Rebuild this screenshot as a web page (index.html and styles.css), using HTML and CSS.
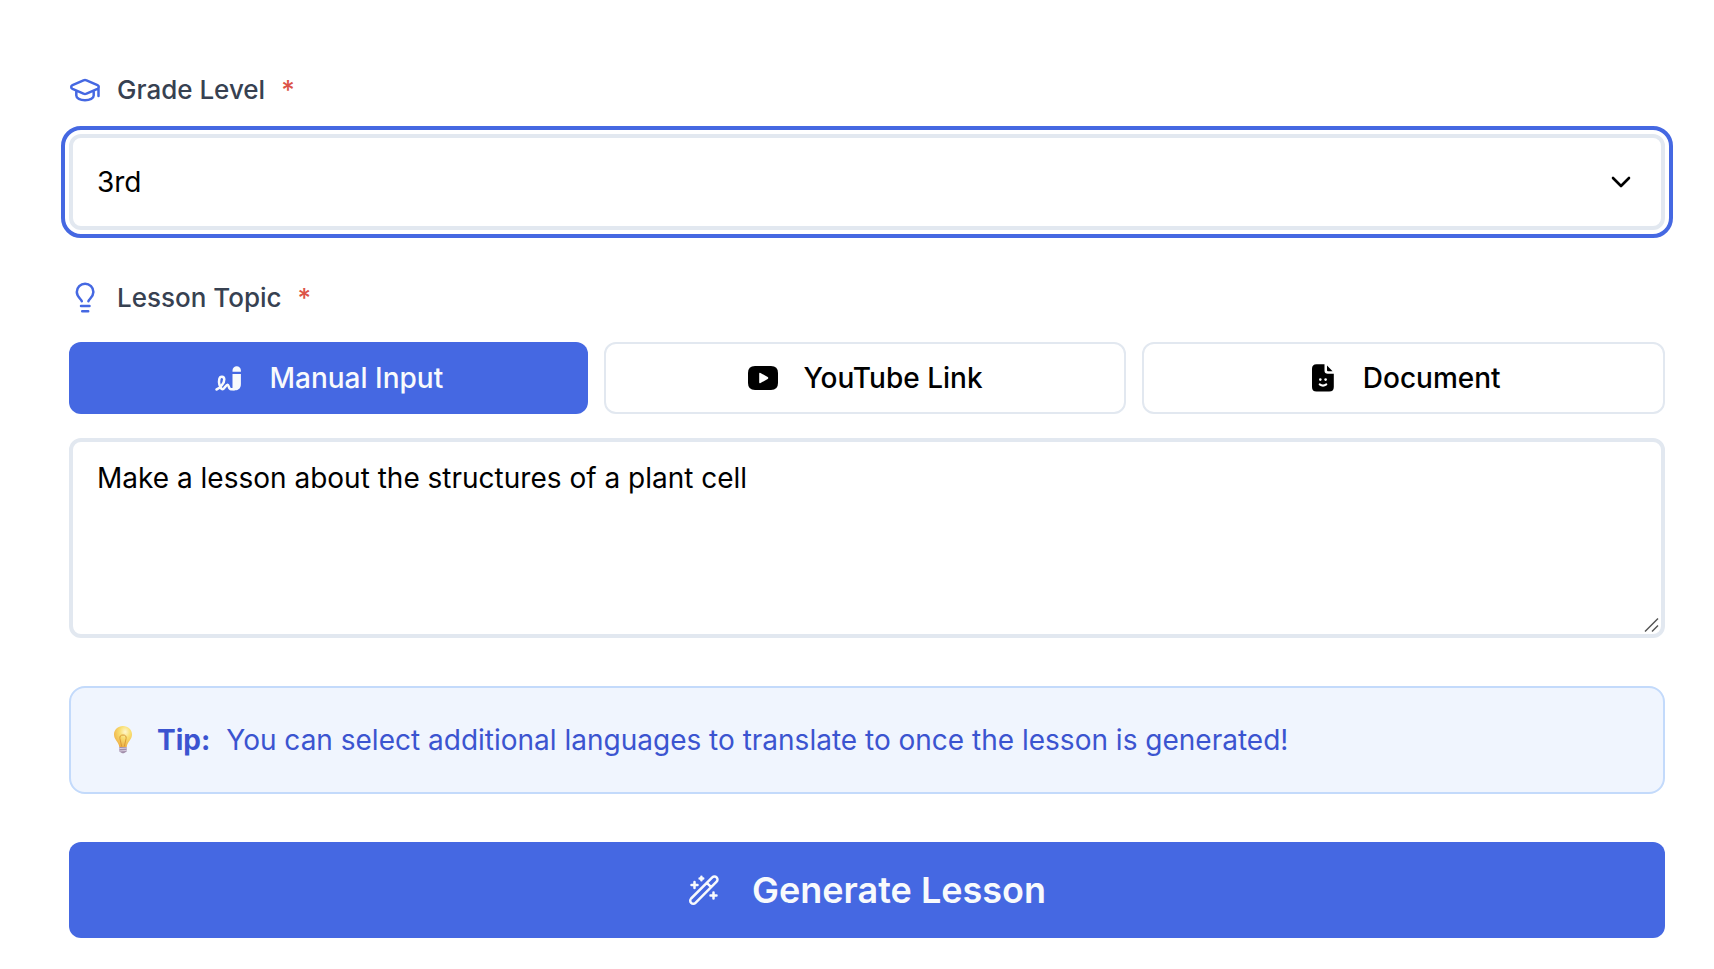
FILE: index.html
```html
<!DOCTYPE html>
<html lang="en">
<head>
<meta charset="utf-8">
<title>Lesson Generator</title>
<link rel="stylesheet" href="styles.css">
</head>
<body>
<form class="lesson-form">
  <div class="field">
    <label class="field-label" for="grade">
      <svg class="icon accent" viewBox="0 0 32 32" fill="none" stroke="currentColor" stroke-width="2.500" stroke-linecap="round" stroke-linejoin="round"><path d="M2.2 13c0-.9.5-1.500 1.300-1.900l11-4.800q1.500-.600 3 0l11 4.800c1.700.800 1.700 3 0 3.800l-11 4.800q-1.500.600-3 0l-11-4.800c-.8-.4-1.300-1-1.300-1.900zM29.500 13.500v8.500M7.300 17v4.500c0 2.700 3.700 4.700 8.700 4.700s8.700-2 8.700-4.700v-4.500"/></svg>
      <span>Grade Level</span><span class="required">*</span>
    </label>
    <div class="select-wrap">
      <select class="control select" id="grade"><option>3rd</option></select>
      <svg class="icon chevron" viewBox="0 0 32 32" fill="none" stroke="currentColor" stroke-width="2.600" stroke-linecap="round" stroke-linejoin="round"><path d="M8 12l8 8 8-8"/></svg>
    </div>
  </div>

  <div class="field">
    <label class="field-label" for="topic">
      <svg class="icon accent" viewBox="0 0 32 32" fill="none" stroke="currentColor" stroke-width="2.500" stroke-linecap="round" stroke-linejoin="round"><path d="M12.800 19.300c-.4-2.200-5-4.300-5-9.300a8.300 8.300 0 0 1 16.600 0c0 5-4.600 7.100-5 9.300M12 24h8.500M13.200 29.300h6"/></svg>
      <span>Lesson Topic</span><span class="required">*</span>
    </label>
    <div class="tabs">
      <button class="tab tab-active" type="button">
        <svg class="icon" viewBox="0 0 32 32" fill="none"><path d="M19.500 8.500a4.200 4.200 0 0 1 8.400 0v1.200h-8.400zM19.500 12h8.400v10c0 4-2.200 6.300-5.900 6.300h-2.500z" fill="currentColor"/><path d="M3.500 27.500c3.500-1.500 8-6.500 7.800-10.200-.2-3.300-4.200-3.700-5-.3-.7 3 .1 8 2.400 10 2.500 1.500 4-4.500 5.800-4.300 1.700.2.800 4.500 3.500 4.500h3" stroke="currentColor" stroke-width="2.500" stroke-linecap="round" stroke-linejoin="round"/></svg>
        Manual Input
      </button>
      <button class="tab" type="button">
        <svg class="icon" viewBox="0 0 32 32"><path fill="currentColor" fill-rule="evenodd" d="M8 4h16q7 0 7 7v10q0 7-7 7H8q-7 0-7-7V11q0-7 7-7zM12.200 11.700v8.600q0 1.400 1.300.8l7.200-4.200q1.200-.9 0-1.800l-7.200-4.200q-1.300-.6-1.300.8z"/></svg>
        YouTube Link
      </button>
      <button class="tab" type="button">
        <svg class="icon" viewBox="0 0 32 32"><path fill="currentColor" d="M9.500 2.300h8v6.200q0 3.200 3.200 3.200h6.100V25q0 4.600-4.600 4.600H9.500Q5 29.600 5 25V6.800q0-4.500 4.500-4.500zM20 3.500l5.600 5.700H21q-1 0-1-1z"/><g fill="#fff"><circle cx="13.300" cy="17.600" r="1.300"/><circle cx="18.600" cy="17.600" r="1.300"/></g><path d="M12.700 22.400q3.300 2.500 6.600 0" fill="none" stroke="#fff" stroke-width="2" stroke-linecap="round"/></svg>
        Document
      </button>
    </div>
    <div class="topic-wrap">
      <textarea class="control topic" id="topic">Make a lesson about the structures of a plant cell</textarea>
      <svg class="grip" viewBox="0 0 16 16" fill="none" stroke="#555" stroke-width="1.500"><path d="M2 14.500L15 1.500M9 14.500l6-6"/></svg>
    </div>
  </div>

  <p class="tip">
    <svg class="icon tip-icon" viewBox="0 0 32 32"><defs><radialGradient id="glass" cx=".62" cy=".28" r=".75"><stop offset="0" stop-color="#fff7cf"/><stop offset=".4" stop-color="#f9df72"/><stop offset="1" stop-color="#edac43"/></radialGradient></defs><path fill="url(#glass)" d="M16 2c-5.200 0-9 3.800-9 8.600 0 5.200 4.600 7.200 5.300 12.400h7.400c.7-5.200 5.300-7.200 5.300-12.400C25 5.800 21.200 2 16 2z"/><path d="M14.700 22.500l-1.800-8q-.5-3.500 3.100-3.500t3.100 3.500l-1.800 8" fill="none" stroke="#d99a35"/><path fill="#a18daa" d="M12.300 23h7.400v4.500l-2 1.200q-1.700 1.300-3.400 0l-2-1.200z"/><path d="M12.300 24.600l7.400-.5M12.300 27l7.400-.5" stroke="#d9cfe0"/></svg>
    <strong>Tip:</strong>
    <span>You can select additional languages to translate to once the lesson is generated!</span>
  </p>

  <button class="submit" type="button">
    <svg class="icon" viewBox="0 0 32 32" fill="none" stroke="currentColor" stroke-width="2.500" stroke-linecap="round" stroke-linejoin="round"><path d="M3.100 24.500L24.300 3.300a3 3 0 0 1 4.300 4.300L7.500 28.800a3 3 0 0 1-4.400-4.300zM18.800 8.800l4.400 4.300M6.500 8v6M3.500 11h6M13.400 2.700v3.600M11.600 4.500h3.600M25.500 18.500v6M22.500 21.500h6"/></svg>
    Generate Lesson
  </button>
</form>
</body>
</html>
```
FILE: styles.css
```css
* {
  box-sizing: border-box;
}

body {
  margin: 0;
  background: #fff;
  color: #000;
  font-family: Inter, "Liberation Sans", sans-serif;
  font-size: 28px;
  line-height: 40px;
}

button,
select,
textarea {
  font: inherit;
  color: inherit;
}

.lesson-form {
  display: flex;
  flex-direction: column;
  gap: 48px;
  padding: 70px 49px 31px 69px;
}

.field {
  display: flex;
  flex-direction: column;
}

.field-label {
  display: flex;
  align-items: center;
  gap: 16px;
  margin-bottom: 24px;
  color: #374151;
  font-size: 26px;
  font-weight: 500;
}

.icon {
  flex: none;
  width: 32px;
  height: 32px;
}

.accent {
  color: #4568e2;
}

.required {
  color: #dc5348;
}

.control {
  width: 100%;
  border: 4px solid #e2e8f0;
  border-radius: 12px;
  background: #fff;
}

.select-wrap,
.topic-wrap {
  position: relative;
}

.select {
  display: block;
  height: 96px;
  padding: 0 64px 0 24px;
  appearance: none;
  outline: 4px solid #4568e2;
  outline-offset: 4px;
}

.chevron {
  position: absolute;
  top: 32px;
  right: 28px;
  pointer-events: none;
}

.tabs {
  display: flex;
  gap: 16px;
  margin-bottom: 24px;
}

.tab {
  display: flex;
  flex: 1;
  align-items: center;
  justify-content: center;
  gap: 24px;
  height: 72px;
  padding: 0;
  border: 2px solid #e2e8f0;
  border-radius: 12px;
  background: #fff;
  font-weight: 500;
}

.tab-active {
  border: 0;
  background: #4568e2;
  color: #f8fafc;
}

.topic {
  display: block;
  height: 200px;
  padding: 16px 24px;
  resize: vertical;
}

.topic::-webkit-resizer {
  display: none;
}

.grip {
  position: absolute;
  right: 6px;
  bottom: 5px;
  width: 16px;
  height: 16px;
  pointer-events: none;
}

.tip {
  display: flex;
  align-items: center;
  gap: 16px;
  margin: 0;
  padding: 32px 34px;
  border: 2px solid #c3dafb;
  border-radius: 16px;
  background: #f0f5fe;
  color: #3b54d0;
}

.tip-icon {
  width: 36px;
}

.submit {
  display: flex;
  align-items: center;
  justify-content: center;
  gap: 32px;
  height: 96px;
  border: 0;
  border-radius: 12px;
  background: #4568e2;
  color: #f8fafc;
  font-size: 36px;
  font-weight: 600;
}
```
